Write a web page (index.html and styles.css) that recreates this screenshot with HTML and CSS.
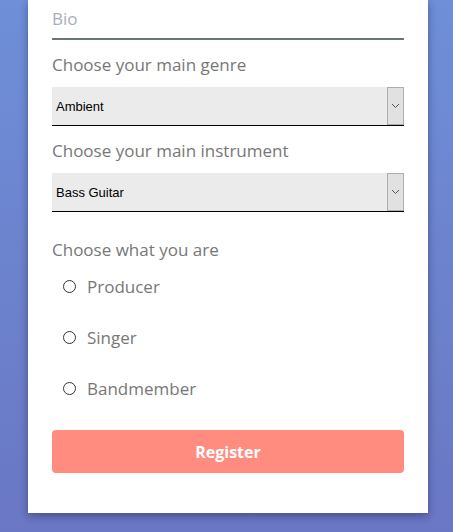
FILE: index.html
```html
<!DOCTYPE html>
<html lang="en">
<head>
<meta charset="utf-8">
<title>Register</title>
<link rel="stylesheet" href="styles.css">
</head>
<body>
<div class="page">
  <form class="card">
    <input class="bio" type="text" placeholder="Bio">
    <label class="label">Choose your main genre</label>
    <div class="select">
      <span class="select-value">Ambient</span>
      <span class="select-arrow"><svg width="9" height="6" viewBox="0 0 9 6"><path d="M1 1 L4.5 4.5 L8 1" fill="none" stroke="#555" stroke-width="1"/></svg></span>
    </div>
    <label class="label">Choose your main instrument</label>
    <div class="select">
      <span class="select-value">Bass Guitar</span>
      <span class="select-arrow"><svg width="9" height="6" viewBox="0 0 9 6"><path d="M1 1 L4.5 4.5 L8 1" fill="none" stroke="#555" stroke-width="1"/></svg></span>
    </div>
    <label class="label label-what">Choose what you are</label>
    <div class="radios">
      <label class="radio"><span class="dot"></span>Producer</label>
      <label class="radio"><span class="dot"></span>Singer</label>
      <label class="radio"><span class="dot"></span>Bandmember</label>
    </div>
    <button class="btn" type="button">Register</button>
  </form>
</div>
</body>
</html>
```

FILE: styles.css
```css
html, body {
  margin: 0;
  padding: 0;
}
body {
  width: 453px;
  height: 532px;
  overflow: hidden;
  background: linear-gradient(to bottom, #6f8fd9 0%, #6b7ec9 70%, #6a77c5 100%);
  font-family: "Open Sans", "DejaVu Sans", sans-serif;
}
.page {
  padding-left: 28px;
}
.card {
  width: 352px;
  background: #fff;
  padding: 0 24px 40px;
  box-shadow: 0 3px 8px rgba(30, 30, 60, 0.45);
  display: flex;
  flex-direction: column;
}
.bio {
  display: block;
  width: 100%;
  box-sizing: border-box;
  height: 40px;
  border: none;
  border-bottom: 2px solid #6b7574;
  padding: 2px 0 4px 0;
  margin: 0;
  font-family: inherit;
  font-size: 17px;
  color: #555;
  outline: none;
  background: transparent;
}
.bio::placeholder {
  color: #a8adc0;
}
.label {
  display: block;
  font-size: 17px;
  color: #777;
  line-height: 24px;
  margin-top: 13px;
  margin-bottom: 10px;
}
.label-what {
  margin-top: 26px;
  margin-bottom: 4px;
}
.select {
  display: flex;
  height: 39px;
  box-sizing: border-box;
  background: #ebebeb;
  border-bottom: 1px solid #000;
}
.select-value {
  flex: 1;
  display: flex;
  align-items: center;
  padding-left: 4px;
  font-family: "Liberation Sans", "DejaVu Sans", sans-serif;
  font-size: 13px;
  color: #000;
}
.select-arrow {
  width: 17px;
  box-sizing: border-box;
  border: 1px solid #adadad;
  background: #e1e1e1;
  display: flex;
  align-items: center;
  justify-content: center;
}
.radios {
  display: flex;
  flex-direction: column;
  gap: 11px;
  padding-left: 11px;
}
.radio {
  display: flex;
  align-items: center;
  height: 40px;
  font-size: 17px;
  color: #777;
}
.dot {
  width: 13px;
  height: 13px;
  box-sizing: border-box;
  border: 1.5px solid #333;
  border-radius: 50%;
  margin-right: 11px;
}
.btn {
  margin-top: 22px;
  height: 43px;
  border: none;
  border-radius: 4px;
  background: #ff8c7f;
  color: #fff;
  font-family: inherit;
  font-weight: 700;
  font-size: 16px;
  cursor: pointer;
}
```
